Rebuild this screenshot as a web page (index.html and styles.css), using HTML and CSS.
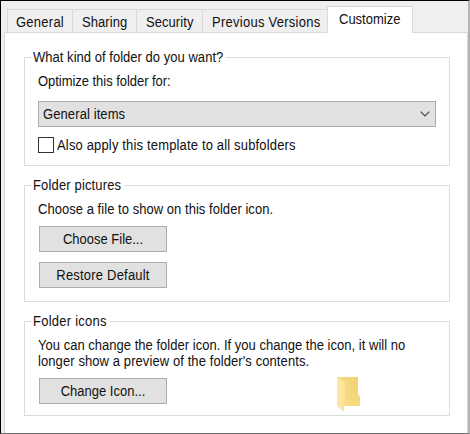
FILE: index.html
```html
<!DOCTYPE html>
<html lang="en">
<head>
<meta charset="utf-8">
<title>Folder Properties</title>
<link rel="stylesheet" href="styles.css">
</head>
<body>
<main class="dialog">
  <nav class="tabs">
    <div class="tab general"><span>General</span></div>
    <div class="tab sharing"><span>Sharing</span></div>
    <div class="tab security"><span>Security</span></div>
    <div class="tab versions"><span>Previous Versions</span></div>
    <div class="tab active"><span>Customize</span></div>
  </nav>
  <section class="panel">
    <fieldset class="group kind">
      <legend><span>What kind of folder do you want?</span></legend>
      <p class="optimize"><span>Optimize this folder for:</span></p>
      <div class="select">
        <span>General items</span>
        <svg class="chevron" width="10" height="6" viewBox="0 0 10 6"><path d="M.7.7 5 5 9.3.7" fill="none" stroke="#444" stroke-width="1.1"/></svg>
      </div>
      <label class="check"><i class="box"></i><span>Also apply this template to all subfolders</span></label>
    </fieldset>
    <fieldset class="group pictures">
      <legend><span>Folder pictures</span></legend>
      <p><span>Choose a file to show on this folder icon.</span></p>
      <button class="choose"><span>Choose File...</span></button>
      <button class="restore"><span>Restore Default</span></button>
    </fieldset>
    <fieldset class="group icons">
      <legend><span>Folder icons</span></legend>
      <p class="info"><span>You can change the folder icon. If you change the icon, it will no</span><br><span class="second">longer show a preview of the folder's contents.</span></p>
      <div class="row">
        <button class="change"><span>Change Icon...</span></button>
        <svg class="folder" width="24" height="36" viewBox="0 0 24 36">
          <defs>
            <linearGradient id="back" x1="0" y1="1" x2="1" y2="0"><stop offset="0" stop-color="#fbe08b"/><stop offset="1" stop-color="#f0d070"/></linearGradient>
            <linearGradient id="front" x1="0" y1="0" x2="1" y2="0"><stop offset="0" stop-color="#fde9a4"/><stop offset="1" stop-color="#fbe296"/></linearGradient>
          </defs>
          <path d="M0 0H21V17L23 20V29H0Z" fill="url(#back)"/>
          <path d="M0 0 8 5V26L7 27V35L0 29Z" fill="url(#front)"/>
        </svg>
      </div>
    </fieldset>
  </section>
</main>
</body>
</html>
```
FILE: styles.css
```css
* { box-sizing: border-box; }
body { margin: 0; font: 13px/16px "Liberation Sans", Arial, sans-serif; color: #111; }
p { margin: 0; }
span { display: inline-block; vertical-align: top; white-space: nowrap; transform: scaleY(1.06); transform-origin: 0 12px; }
.dialog {
  width: 470px; height: 434px; padding: 5px 0 0 3px;
  display: flex; flex-direction: column; overflow: hidden;
  background: #f0efef;
  border: 1px solid #000; border-right: 2px solid #b4b4b4; border-bottom-color: #707070;
}
.tabs { display: flex; align-items: flex-end; height: 27px; padding-left: 3px; margin-bottom: -1px; position: relative; }
.tab { height: 24px; border: 1px solid #d9d9d9; border-right: 0; padding: 5px 0 0 8px; }
.general { width: 65px; letter-spacing: .25px; }
.sharing { width: 64px; padding-left: 9px; letter-spacing: .06px; }
.security { width: 66px; padding-left: 9px; letter-spacing: .06px; }
.versions { width: 125px; padding-left: 9px; letter-spacing: .26px; }
.active { width: 86px; height: 27px; padding: 5px 0 0 11px; background: #fff; border-right: 1px solid #d9d9d9; border-bottom-color: #fff; }
.panel { flex: 1; width: 464px; background: #fff; border: 1px solid #d9d9d9; border-bottom: 0; padding: 17px 0 0 19px; }
.group { width: 426px; margin: 0; padding: 0 0 0 13px; border: 1px solid #dcdcdc; }
.group legend { height: 15px; line-height: 15px; margin-left: -7px; padding: 0 3px 0 2px; }
.kind { height: 116px; margin-bottom: 12px; }
.kind legend { letter-spacing: .03px; }
.optimize { padding-top: 9px; letter-spacing: -.04px; }
.select { display: flex; justify-content: space-between; align-items: center; width: 398px; height: 26px; margin-top: 11px; padding: 0 5px 0 4px; background: #e1e1e1; border: 1px solid #adadad; letter-spacing: .1px; }
.select span { margin-top: 2px; }
.check { display: flex; align-items: center; height: 16px; margin-top: 10px; letter-spacing: .16px; }
.check span { margin-top: 2px; }
.box { width: 16px; height: 16px; border: 1px solid #333; margin-right: 3px; }
.pictures { height: 124px; margin-bottom: 12px; }
.pictures legend { letter-spacing: .15px; }
.pictures p { padding: 9px 0 8px; letter-spacing: .04px; }
button { display: block; width: 128px; height: 26px; margin: 0 0 10px 1px; padding: 2px 0 0; font: inherit; color: #111; background: #e1e1e1; border: 1px solid #adadad; text-align: center; }
.restore { letter-spacing: .2px; }
.icons { height: 102px; }
.icons legend { letter-spacing: .25px; }
.info { padding-top: 9px; letter-spacing: .02px; }
.second { letter-spacing: .09px; }
.row { display: flex; }
.row button { margin-top: 8px; }
.folder { margin: 7px 0 0 170px; }
```
